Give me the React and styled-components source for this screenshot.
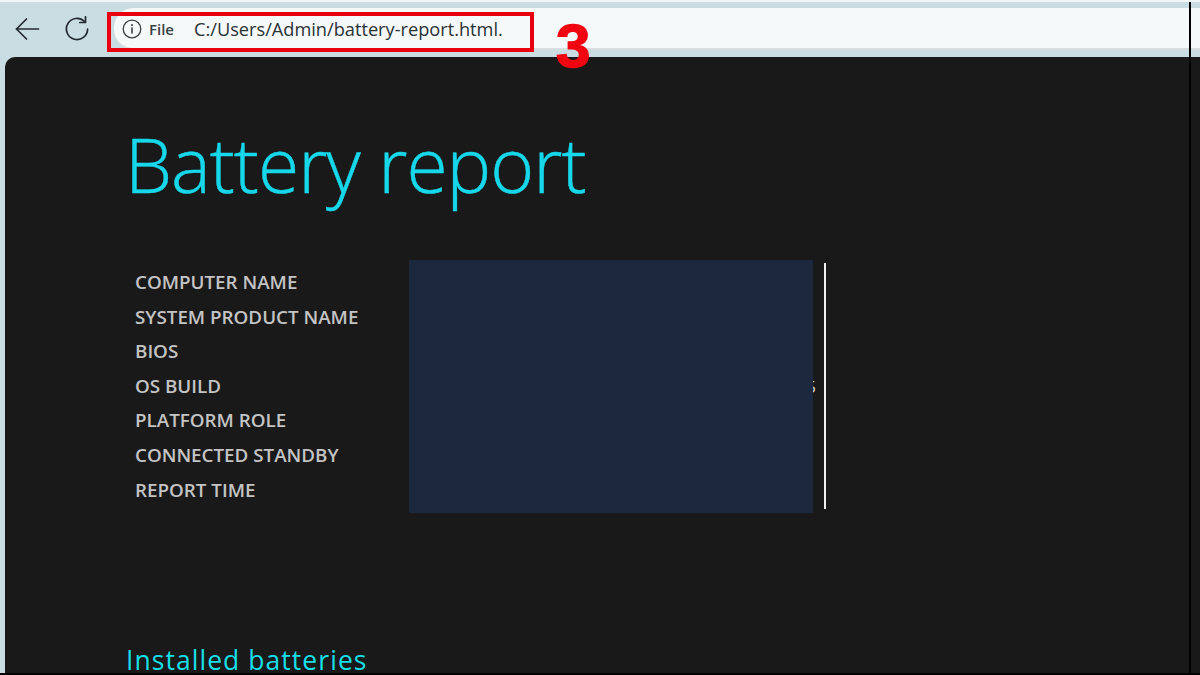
import React from 'react'
import styled, { createGlobalStyle } from 'styled-components'

const Global = createGlobalStyle`
  html, body {
    margin: 0;
    padding: 0;
    background: #fff;
  }
  * {
    box-sizing: border-box;
  }
`
const Page = styled.div`
  position: relative;
  width: 1200px;
  height: 675px;
  overflow: hidden;
  display: flex;
  flex-direction: column;
  background: #c9dde3;
  border-top: 2px solid #f1f6f7;
  font-family: "Open Sans", "Liberation Sans", sans-serif;
`
const Toolbar = styled.div`
  height: 55px;
  flex: none;
  display: flex;
  align-items: flex-start;
  padding: 6px 0 0 14px;
`
const NavButton = styled.button`
  width: 28px;
  height: 28px;
  margin: 7px 21px 0 0;
  padding: 0;
  border: 0;
  background: none;
  color: #222b30;
  display: flex;
  align-items: center;
  justify-content: center;
`
const AddressBar = styled.div`
  position: relative;
  flex: 1;
  height: 42px;
  margin-left: 2px;
  display: flex;
  align-items: center;
  padding: 2px 0 0 8px;
  background: #f5f9fa;
  border-radius: 20px 0 0 20px;
  border-bottom: 2px solid #d8dedf;
  color: #2a3135;
`
const SiteChip = styled.span`
  display: flex;
  align-items: center;
  gap: 7px;
  font-size: 15px;
  font-weight: 600;
  color: #3a4145;
`
const Url = styled.span`
  margin-left: 20px;
  font-size: 18.2px;
  white-space: nowrap;
`
const Highlight = styled.div`
  position: absolute;
  left: 107px;
  top: 10px;
  width: 427px;
  height: 40px;
  border: 4px solid #e8000f;
`
const StepNumber = styled.div`
  position: absolute;
  left: 556px;
  top: 11px;
  font-family: "Liberation Sans", sans-serif;
  font-size: 62px;
  line-height: 66px;
  font-weight: 700;
  color: #f00511;
  -webkit-text-stroke: 1.5px #f00511;
`
const RightEdge = styled.div`
  position: absolute;
  right: 9px;
  top: -2px;
  width: 2px;
  height: 100%;
  background: #000;
`
const BottomEdge = styled.div`
  position: absolute;
  left: 0;
  bottom: 0;
  width: 100%;
  height: 2px;
  background: #000;
`
const Report = styled.main`
  flex: 1;
  min-height: 0;
  margin-left: 5px;
  padding: 52px 0 0 123px;
  background: #191919;
  border-radius: 10px 0 0 0;
`
const Title = styled.h1`
  margin: 0 0 0 -3px;
  font-size: 75px;
  line-height: 110px;
  font-weight: 300;
  letter-spacing: -1px;
  color: #16d8ea;
  white-space: nowrap;
  -webkit-text-stroke: 0.5px #16d8ea;
`
const InfoBlock = styled.section`
  display: flex;
  align-items: flex-start;
  margin-top: 41px;
`
const Labels = styled.dl`
  width: 281px;
  margin: 5px 0 0;
  padding-left: 7px;
`
const Label = styled.dt`
  height: 34.6px;
  font-size: 18.8px;
  line-height: 34.6px;
  font-weight: 600;
  color: #c4c4c4;
  white-space: nowrap;
`
const Values = styled.div`
  position: relative;
  width: 404px;
  height: 253px;
`
const Redaction = styled.div`
  position: absolute;
  inset: 0;
  background: #1c283d;
`
const ValueEnd = styled.span`
  position: absolute;
  right: -3px;
  top: 116px;
  font-size: 17px;
  line-height: 22px;
  color: #d8d8d8;
`
const Divider = styled.div`
  width: 2px;
  height: 246px;
  margin: 3px 0 0 11px;
  background: #f0f0f0;
`
const SectionTitle = styled.h2`
  margin: 133px 0 0 -2px;
  font-size: 26.5px;
  line-height: 28px;
  font-weight: 400;
  letter-spacing: 1.05px;
  color: #16dfe6;
  white-space: nowrap;
`

const labels = [
  'COMPUTER NAME',
  'SYSTEM PRODUCT NAME',
  'BIOS',
  'OS BUILD',
  'PLATFORM ROLE',
  'CONNECTED STANDBY',
  'REPORT TIME',
]

const App = () => {
  return (
    <Page>
      <Global />
      <Toolbar>
        <NavButton aria-label="Back">
          <svg width="26" height="26" viewBox="0 0 26 26" fill="none" stroke="currentColor" strokeWidth="1.7" strokeLinecap="round" strokeLinejoin="round">
            <path d="M1.5 13H23.5" />
            <path d="M11.5 3L1.5 13L11.5 23" />
          </svg>
        </NavButton>
        <NavButton aria-label="Reload">
          <svg width="26" height="26" viewBox="0 0 26 26" fill="none" stroke="currentColor" strokeWidth="1.7" strokeLinecap="round" strokeLinejoin="round">
            <path d="M20.5 5.5A10.6 10.6 0 1 0 23.6 13" />
            <path d="M21.5 0.8V6.5H15.8" />
          </svg>
        </NavButton>
        <AddressBar>
          <SiteChip>
            <svg width="20" height="20" viewBox="0 0 20 20" fill="none" stroke="currentColor" strokeWidth="1.3" strokeLinecap="round">
              <circle cx="10" cy="10" r="8.8" />
              <path d="M10 9V14" strokeWidth="1.6" />
              <path d="M10 5.8V6.2" strokeWidth="1.8" />
            </svg>
            File
          </SiteChip>
          <Url>C:/Users/Admin/battery-report.html.</Url>
        </AddressBar>
      </Toolbar>
      <Report>
        <Title>Battery report</Title>
        <InfoBlock>
          <Labels>
            {labels.map(label => (
              <Label key={label}>{label}</Label>
            ))}
          </Labels>
          <Values>
            <ValueEnd>5</ValueEnd>
            <Redaction />
          </Values>
          <Divider />
        </InfoBlock>
        <SectionTitle>Installed batteries</SectionTitle>
      </Report>
      <Highlight />
      <StepNumber>3</StepNumber>
      <RightEdge />
      <BottomEdge />
    </Page>
  )
}

export default App
